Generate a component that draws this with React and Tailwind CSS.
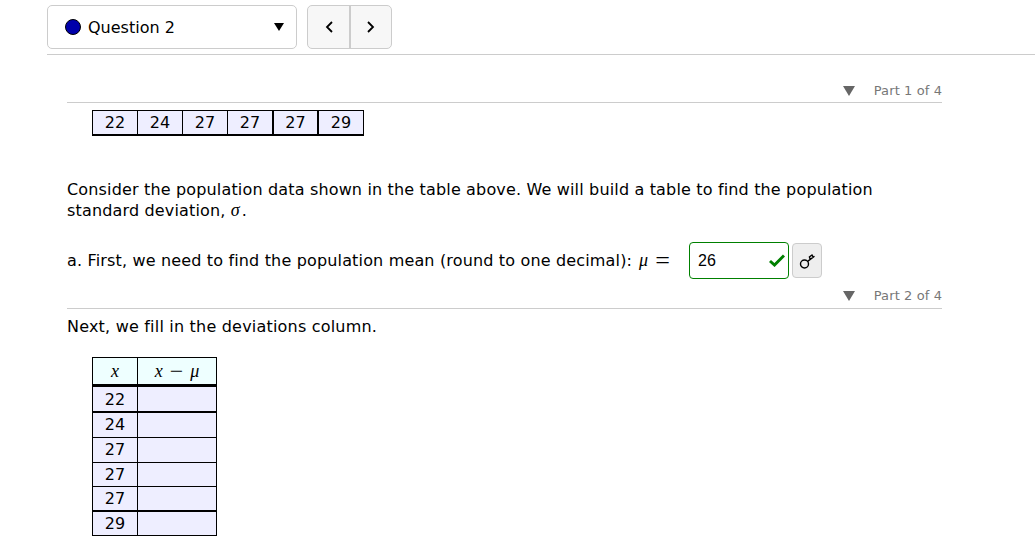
import React from 'react';

const values = [22, 24, 27, 27, 27, 29];
// cell widths of the top strip, two of its rules are thicker
const cells = [
  'w-[45px] border-r',
  'w-[45px] border-r',
  'w-[45px] border-r',
  'w-[46px] border-r-2',
  'w-[45px] border-r-2',
  'flex-1',
];
// row heights and rules read off the source table, the rules are not all equal
const rows = [
  'h-[26px] border-b-2',
  'h-[25px] border-b',
  'h-[25px] border-b',
  'h-[24px] border-b',
  'h-[25px] border-b-2',
  'h-[23px]',
];

const PartHeader = ({ label, className = '' }) => (
  <div className={`flex items-center justify-end h-[24px] border-b border-[#cccccc] ${className}`}>
    <span className="w-0 h-0 border-l-[6px] border-r-[6px] border-t-[10px] border-l-transparent border-r-transparent border-t-[#666666] mr-[19px]" />
    <span className="text-[13px] text-[#777777] tracking-[0.1px]">{label}</span>
  </div>
);

const Math = ({ children, className = '' }) => (
  <span className={`italic text-[18px] font-['Liberation_Serif',serif] ${className}`}>{children}</span>
);

export default function App() {
  return (
    <div className="w-[1035px] h-[560px] overflow-hidden bg-white text-black font-['DejaVu_Sans',sans-serif] text-[16px]">
      <div className="ml-[47px] pt-[5px] h-[55px] border-b border-[#cccccc] flex gap-[10px] items-start">
        <div className="w-[250px] h-[44px] border border-[#cccccc] rounded-[5px] flex items-center pl-[17px] pr-[12px]">
          <span className="w-[16px] h-[16px] rounded-full bg-[#0000aa] border border-black mr-[7px]" />
          <span className="flex-1 pt-[1px]">Question 2</span>
          <span className="w-0 h-0 border-l-[5px] border-r-[5px] border-t-[8px] border-l-transparent border-r-transparent border-t-black" />
        </div>
        <div className="w-[85px] h-[44px] border border-[#cccccc] rounded-[5px] bg-[#f7f7f7] flex">
          <div className="w-[43px] border-r-2 border-[#cccccc] flex items-center justify-center">
            <svg width="8" height="12" viewBox="0 0 8 12" fill="none" stroke="black" strokeWidth="1.8">
              <path d="M7 1 L2 6 L7 11" />
            </svg>
          </div>
          <div className="flex-1 flex items-center justify-center">
            <svg width="8" height="12" viewBox="0 0 8 12" fill="none" stroke="black" strokeWidth="1.8">
              <path d="M1 1 L6 6 L1 11" />
            </svg>
          </div>
        </div>
      </div>

      <div className="ml-[67px] w-[875px]">
        <div className="pt-[24px]">
          <PartHeader label="Part 1 of 4" className="pt-[1px]" />
        </div>

        <div className="mt-[7px] ml-[25px] w-[272px] h-[26px] border border-black border-b-2 flex bg-[#eeeeff]">
          {values.map((v, i) => (
            <div key={i} className={`flex items-center justify-center border-black ${cells[i]}`}>{v}</div>
          ))}
        </div>

        <div className="mt-[43px] leading-[21px] tracking-[0.16px]">
          <p>Consider the population data shown in the table above. We will build a table to find the population</p>
          <p className="h-[21px]">standard deviation, <Math className="mr-[2px]">σ</Math>.</p>
        </div>

        <div className="mt-[21px] h-[37px] flex items-center tracking-[0.16px]">
          <span className="w-[622px] flex items-center shrink-0">
            <span>a. First, we need to find the population mean (round to one decimal):</span>
            <Math className="ml-[7px]">μ</Math>
            <span className="ml-[7px] text-[26px] leading-none font-['Liberation_Serif',serif]">=</span>
          </span>
          <div className="w-[100px] h-[37px] border border-[#008000] rounded-[4px] flex items-center pl-[8px] pr-[3px] tracking-normal font-['Liberation_Sans',sans-serif]">
            <span className="flex-1">26</span>
            <svg width="16" height="13" viewBox="0 0 16 13" fill="none" stroke="#008000" strokeWidth="3">
              <path d="M1 7 L5.5 11 L15 1.5" />
            </svg>
          </div>
          <div className="ml-[3px] w-[30px] h-[35px] border border-[#cccccc] rounded-[4px] bg-[#eeeeee] flex items-center justify-center">
            <svg width="17" height="18" viewBox="0 0 17 18" fill="none" stroke="black" strokeWidth="1.4">
              <circle cx="5.5" cy="12" r="4" />
              <path d="M8.6 9.4 L15.5 4.2 M11.4 7.4 L10.4 5 L13 3 L14.2 5.2" />
            </svg>
          </div>
        </div>

        <div className="mt-[6px]">
          <PartHeader label="Part 2 of 4" className="pb-[1px]" />
        </div>

        <p className="mt-[7px] leading-[21px] tracking-[0.2px]">Next, we fill in the deviations column.</p>

        <div className="mt-[20px] ml-[25px] w-[125px] border border-black">
          <div className="flex h-[29px] bg-[#eeffff] border-b-[3px] border-black">
            <div className="w-[45px] border-r border-black flex items-center justify-center"><Math>x</Math></div>
            <div className="flex-1 flex items-center justify-center gap-[7px]">
              <Math>x</Math>
              <span className="text-[24px] leading-none font-['Liberation_Serif',serif]">−</span>
              <Math>μ</Math>
            </div>
          </div>
          {values.map((v, i) => (
            <div key={i} className={`flex bg-[#eeeeff] border-black ${rows[i]}`}>
              <div className={`w-[45px] border-r border-black flex items-center justify-center ${i === 0 ? 'pt-[2px]' : ''}`}>{v}</div>
              <div className="flex-1" />
            </div>
          ))}
        </div>
      </div>
    </div>
  );
}
